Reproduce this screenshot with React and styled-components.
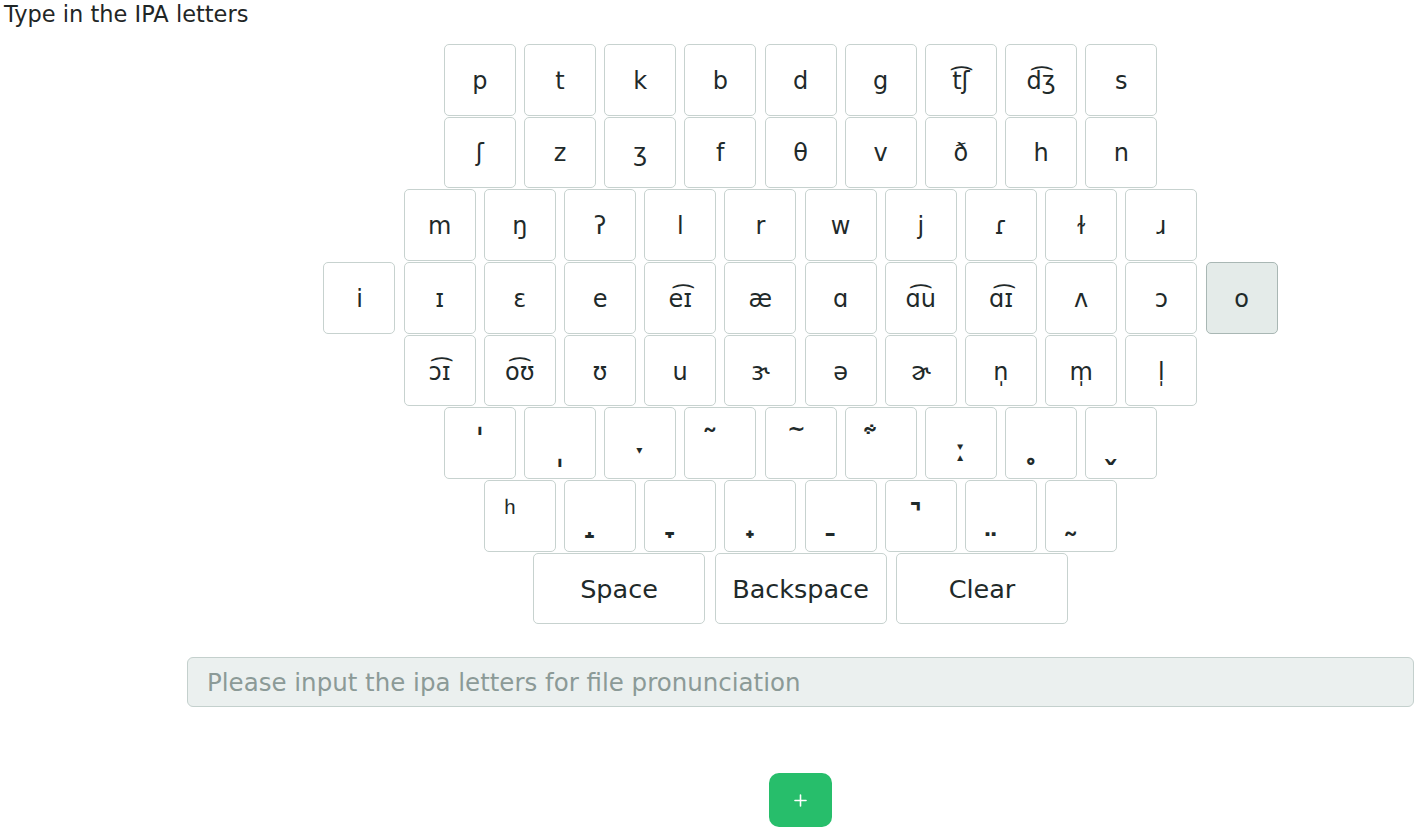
import React from "react";
import styled, { createGlobalStyle } from "styled-components";
import { Plus } from "lucide-react";

const GlobalStyle = createGlobalStyle`
  html, body {
    margin: 0;
    padding: 0;
    background: #ffffff;
    font-family: "DejaVu Sans", Verdana, sans-serif;
    color: #1f2a2a;
  }
  * { box-sizing: border-box; }
`;

const Page = styled.div`
  display: flex;
  flex-direction: column;
`;

const Title = styled.div`
  font-size: 22.5px;
  line-height: 28px;
  padding-left: 4px;
  color: #1f2626;
`;

const Form = styled.div`
  display: flex;
  flex-direction: column;
  padding: 0 7px 0 187px;
`;

const Keyboard = styled.div`
  display: flex;
  flex-direction: column;
  gap: 1.2px;
  margin-top: 16px;
`;

const Row = styled.div`
  display: flex;
  justify-content: center;
  gap: ${(p) => (p.$wide ? "9.5px" : "8.2px")};
`;

const Key = styled.button`
  width: ${(p) => (p.$wide ? "172px" : "72px")};
  height: 71.5px;
  padding: ${(p) => (p.$wide ? "3px 0 0" : "2px 0 0")};
  margin: 0;
  display: flex;
  align-items: center;
  justify-content: center;
  border: 1.5px solid ${(p) => (p.$active ? "#a9b7b4" : "#c7d2cf")};
  border-radius: 5px;
  background: ${(p) => (p.$active ? "#e4ebe9" : "#ffffff")};
  color: #1f2a2a;
  font-family: "DejaVu Sans", Verdana, sans-serif;
  font-size: ${(p) => (p.$wide ? "25.5px" : "24px")};
  line-height: 1;
  cursor: pointer;
`;

const Modifier = styled.span`
  font-size: 30px;
  font-weight: bold;
  line-height: 1;
  transform: translateY(${(p) => p.$shift || 0}px);
`;

const Mark = styled.span`
  font-size: ${(p) => p.$size || 32}px;
  font-weight: ${(p) => (p.$light ? "normal" : "bold")};
  line-height: 1;
  margin-right: ${(p) => (p.$right ?? 16)}px;
  white-space: pre;
  transform: translateY(${(p) => p.$shift || 0}px);
`;

const Input = styled.input`
  margin-top: 33px;
  width: 100%;
  height: 50px;
  border: 1.5px solid #c4d0cd;
  border-radius: 6px;
  background: #ebf0ef;
  padding: 0 19px;
  font-family: "DejaVu Sans", Verdana, sans-serif;
  font-size: 24.5px;
  color: #1f2a2a;
  outline: none;
  &::placeholder {
    color: #8b9a97;
  }
`;

const AddRow = styled.div`
  display: flex;
  justify-content: center;
  margin-top: 66px;
`;

const AddButton = styled.button`
  width: 63px;
  height: 54px;
  border: none;
  border-radius: 10px;
  background: #27be6b;
  color: #ffffff;
  display: flex;
  align-items: center;
  justify-content: center;
  padding: 0;
  cursor: pointer;
`;

const rows = [
  ["p", "t", "k", "b", "d", "g", "t\u0361\u0283", "d\u0361\u0292", "s"],
  ["\u0283", "z", "\u0292", "f", "\u03b8", "v", "\u00f0", "h", "n"],
  ["m", "\u014b", "\u0294", "l", "r", "w", "j", "\u027e", "\u026b", "\u0279"],
  ["i", "\u026a", "\u025b", "e", "e\u0361\u026a", "\u00e6", "\u0251", "\u0251\u0361u", "\u0251\u0361\u026a", "\u028c", "\u0254", "o"],
  ["\u0254\u0361\u026a", "o\u0361\u028a", "\u028a", "u", "\u025d", "\u0259", "\u025a", "n\u0329", "m\u0329", "l\u0329"],
  ["\u02c8", "\u02cc", "\u02d1", "\u0303", "\u0334", "\u034b", "\u02d0", "\u0325", "\u032c"],
  ["\u036a", "\u031d", "\u031e", "\u031f", "\u0320", "\u031a", "\u0324", "\u0330"],
];

const modifierShift = {
  "\u02c8": -4,
  "\u02cc": 11,
  "\u02d1": 11,
  "\u02d0": 7,
};

const markStyle = {
  "\u0334": { size: 22, shift: -15, right: 2 },
  "\u034b": { size: 34, shift: -3 },
  "\u036a": { size: 30, shift: -6, light: true, right: 28 },
  "\u031a": { size: 32, shift: 4 },
  "\u031d": { shift: 2 },
  "\u031e": { shift: 2 },
  "\u031f": { shift: 2 },
  "\u0320": { shift: 2 },
  "\u0324": { shift: 1 },
  "\u0330": { shift: 1 },
  "\u0325": { shift: 2 },
  "\u032c": { shift: 2 },
  "\u0303": { shift: -2 },
};

function Glyph({ ch }) {
  const code = ch.codePointAt(0);
  if (ch.length === 1 && code >= 0x0300 && code <= 0x036f) {
    const s = markStyle[ch] || {};
    return (
      <Mark $size={s.size} $shift={s.shift} $light={s.light} $right={s.right}>
        {"\u00a0" + ch}
      </Mark>
    );
  }
  if (ch in modifierShift) {
    return <Modifier $shift={modifierShift[ch]}>{ch}</Modifier>;
  }
  return ch;
}

export default function App() {
  return (
    <Page>
      <GlobalStyle />
      <Title>Type in the IPA letters</Title>
      <Form>
        <Keyboard>
          {rows.map((row, ri) => (
            <Row key={ri}>
              {row.map((ch, ci) => (
                <Key key={ci} $active={ch === "o" && ri === 3}>
                  <Glyph ch={ch} />
                </Key>
              ))}
            </Row>
          ))}
          <Row $wide>
            <Key $wide>Space</Key>
            <Key $wide>Backspace</Key>
            <Key $wide>Clear</Key>
          </Row>
        </Keyboard>
        <Input placeholder="Please input the ipa letters for file pronunciation" />
        <AddRow>
          <AddButton aria-label="Add">
            <Plus size={19} strokeWidth={2} />
          </AddButton>
        </AddRow>
      </Form>
    </Page>
  );
}
